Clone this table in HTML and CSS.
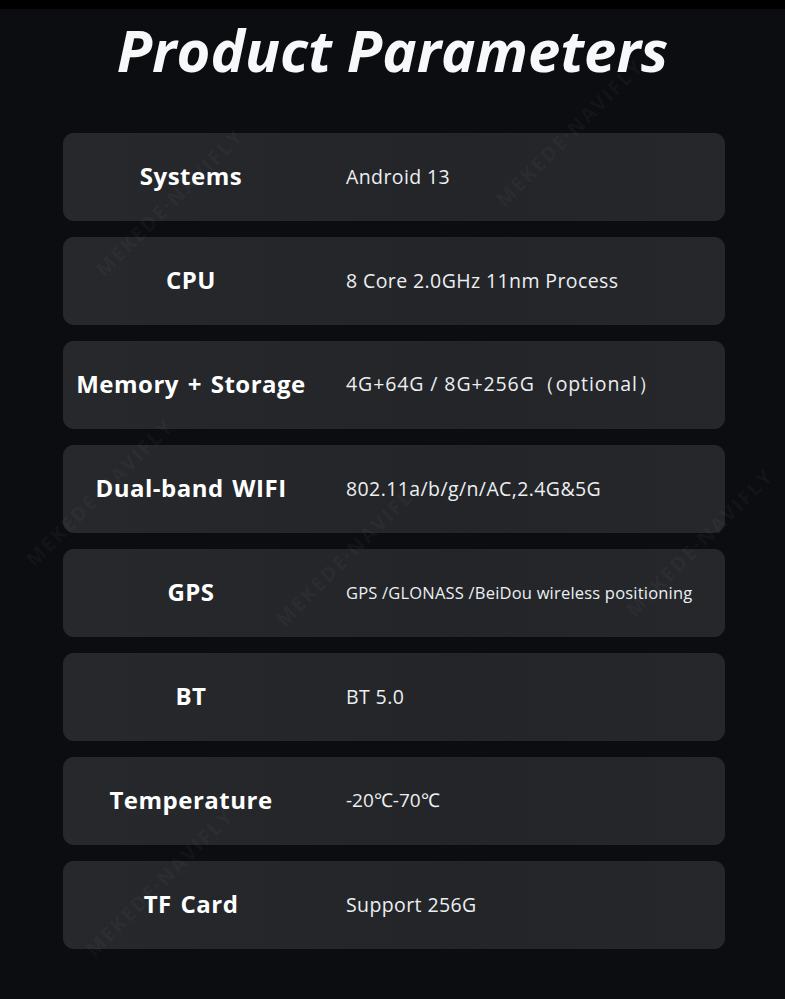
FILE: index.html
```html
<!DOCTYPE html>
<html>
<head>
<meta charset="utf-8">
<link rel="stylesheet" href="styles.css">
</head>
<body>
<div class="topbar"></div>
<div class="page">
  <h1 class="title">Product Parameters</h1>
  <div class="list">
    <div class="row"><div class="label">Systems</div><div class="value">Android 13</div></div>
    <div class="row"><div class="label">CPU</div><div class="value">8 Core 2.0GHz 11nm Process</div></div>
    <div class="row"><div class="label">Memory + Storage</div><div class="value mem">4G+64G / 8G+256G（optional）</div></div>
    <div class="row"><div class="label">Dual-band WIFI</div><div class="value">802.11a/b/g/n/AC,2.4G&amp;5G</div></div>
    <div class="row"><div class="label">GPS</div><div class="value small">GPS /GLONASS /BeiDou wireless positioning</div></div>
    <div class="row"><div class="label">BT</div><div class="value">BT 5.0</div></div>
    <div class="row"><div class="label">Temperature</div><div class="value mid">-20℃-70℃</div></div>
    <div class="row"><div class="label">TF Card</div><div class="value">Support 256G</div></div>
  </div>
  <div class="wm w1">MEKEDE·NAVIFLY</div>
  <div class="wm w2">MEKEDE·NAVIFLY</div>
  <div class="wm w3">MEKEDE·NAVIFLY</div>
  <div class="wm w4">MEKEDE·NAVIFLY</div>
  <div class="wm w5">MEKEDE·NAVIFLY</div>
  <div class="wm w6">MEKEDE·NAVIFLY</div>
</div>
</body>
</html>
```
FILE: styles.css
```css
html, body {
  margin: 0;
  padding: 0;
  background: #0b0d10;
  height: 999px;
  overflow: hidden;
}
.topbar {
  height: 9px;
  background: #000;
}
.page {
  position: relative;
  height: 990px;
}
.title {
  margin: 0;
  height: 124px;
  box-sizing: border-box;
  padding-top: 8px;
  text-align: center;
  color: #f7f8fa;
  font-family: "Open Sans", sans-serif;
  font-style: italic;
  font-weight: 700;
  font-size: 58px;
  line-height: 66px;
}
.list {
  display: flex;
  flex-direction: column;
  gap: 16px;
  padding: 0 60px 0 63px;
}
.row {
  height: 88px;
  border-radius: 11px;
  background: linear-gradient(90deg, #26282c 0%, #232529 60%, #25272b 100%);
  display: flex;
  align-items: center;
}
.label {
  width: 256px;
  margin-top: -4px;
  text-align: center;
  color: #ffffff;
  font-family: "Open Sans", sans-serif;
  font-weight: 700;
  font-size: 24px;
  white-space: nowrap;
  letter-spacing: 0.5px;
  word-spacing: 2px;
}
.value {
  padding-left: 27px;
  margin-top: -2px;
  color: #eceff1;
  font-family: "Open Sans", sans-serif;
  font-size: 19.5px;
  letter-spacing: 0.4px;
  white-space: nowrap;
}
.value.mem { letter-spacing: 0.9px; }
.value.small { font-size: 16.5px; letter-spacing: 0.2px; }
.value.mid { font-size: 19px; letter-spacing: 0; }
.wm {
  position: absolute;
  color: rgba(255,255,255,0.045);
  font-family: "Open Sans", sans-serif;
  font-weight: 700;
  font-size: 20px;
  letter-spacing: 2px;
  transform: rotate(-45deg);
  pointer-events: none;
  white-space: nowrap;
}
.w1 { left: 70px; top: 180px; }
.w2 { left: 470px; top: 110px; }
.w3 { left: 0px; top: 470px; }
.w4 { left: 250px; top: 530px; }
.w5 { left: 600px; top: 520px; }
.w6 { left: 60px; top: 860px; }
```
